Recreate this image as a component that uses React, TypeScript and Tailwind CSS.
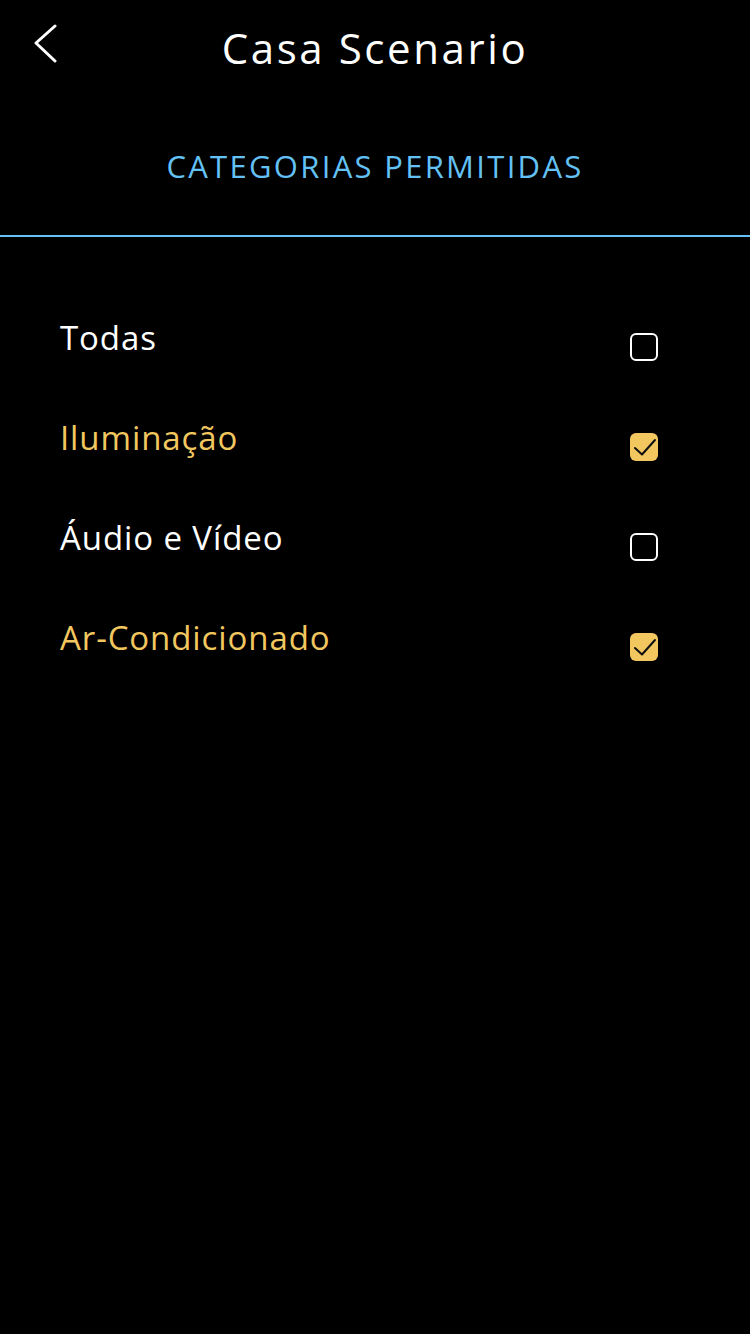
import React, { useState } from "react"

const items = [
  { label: "Todas", checked: false },
  { label: "Iluminação", checked: true },
  { label: "Áudio e Vídeo", checked: false },
  { label: "Ar-Condicionado", checked: true },
]

function CheckBox({ checked }: { checked: boolean }) {
  if (checked) {
    return (
      <div className="w-[28px] h-[28px] rounded-[6px] bg-[#f2c75f] relative">
        <svg className="absolute inset-0" width="28" height="28" viewBox="0 0 28 28" fill="none">
          <path d="M5 15 L12 21.5 L25 7" stroke="#111" strokeWidth="2" strokeLinecap="round" strokeLinejoin="round" />
        </svg>
      </div>
    )
  }
  return <div className="w-[28px] h-[28px] rounded-[6px] border-2 border-white"></div>
}

export default function App() {
  const [state, setState] = useState(items)

  return (
    <div className="w-[750px] h-[1334px] bg-black text-white font-['Open_Sans',sans-serif]">
      {/* Header */}
      <div className="relative h-[96px] flex items-center justify-center">
        <button className="absolute left-[30px] top-[24px]">
          <svg width="30" height="40" viewBox="0 0 30 40" fill="none">
            <path d="M25 2 L6 19 L25 37" stroke="white" strokeWidth="3" strokeLinecap="round" strokeLinejoin="round" />
          </svg>
        </button>
        <h1 className="text-[42px] font-medium tracking-[2.6px] -mt-[2px]">Casa Scenario</h1>
      </div>

      {/* Tab */}
      <div className="h-[141px] flex items-center justify-center border-b-2 border-[#63c1f5]">
        <span className="text-[#63c1f5] text-[31px] font-medium tracking-[2.3px] mt-[2px]">CATEGORIAS PERMITIDAS</span>
      </div>

      {/* List */}
      <div className="pt-[79px] pl-[60px] pr-[92px] flex flex-col">
        {state.map((item, i) => (
          <div
            key={item.label}
            className="h-[100px] flex items-start justify-between cursor-pointer"
            onClick={() => setState(state.map((s, j) => (j === i ? { ...s, checked: !s.checked } : s)))}
          >
            <span
              className={`text-[33px] font-medium tracking-[0.9px] leading-[44px] ${item.checked ? "text-[#f2c75f]" : "text-white"}`}
            >
              {item.label}
            </span>
            <div className="mt-[17px]">
              <CheckBox checked={item.checked} />
            </div>
          </div>
        ))}
      </div>
    </div>
  )
}
